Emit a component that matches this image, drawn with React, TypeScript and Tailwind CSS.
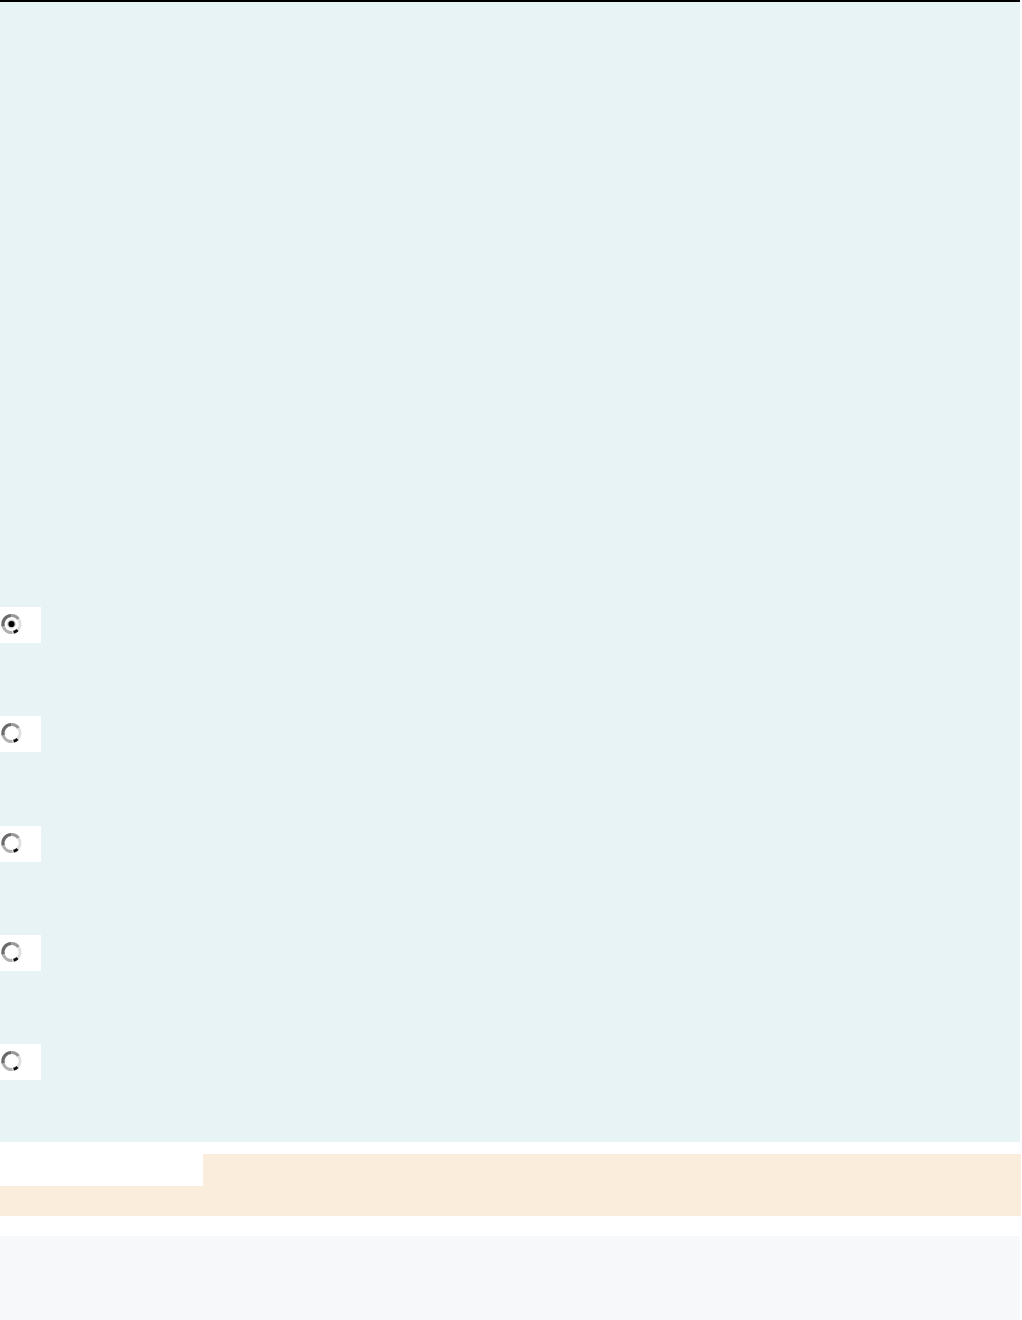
import React from "react";

const RadioMark = ({ checked }: { checked?: boolean }) => (
  <svg width="23" height="24" viewBox="0 0 23 24" className="block">
    <path d="M11.5 3.5 A8.5 8.5 0 0 0 3.3 14.5" fill="none" stroke="#6b6b6b" strokeWidth="3.2" />
    <path d="M3.3 14.5 A8.5 8.5 0 0 0 12.5 20.4" fill="none" stroke="#b0b0b0" strokeWidth="3.2" />
    <path d="M11.5 3.5 A8.5 8.5 0 0 1 18.5 7.2" fill="none" stroke="#999" strokeWidth="3.2" />
    <path d="M18.5 7.2 A8.5 8.5 0 0 1 17.5 18" fill="none" stroke="#e0e0e0" strokeWidth="3.2" />
    <path d="M17.5 18 A8.5 8.5 0 0 1 13.5 20.3" fill="none" stroke="#111" strokeWidth="3.2" />
    {checked && (
      <>
        <circle cx="11.5" cy="12" r="4.4" fill="#cfcfcf" />
        <circle cx="11.5" cy="12" r="3.1" fill="#000" />
      </>
    )}
  </svg>
);

const RadioBox = ({ checked }: { checked?: boolean }) => (
  <div className="h-[36px] w-[41px] bg-white pt-[5px]">
    <RadioMark checked={checked} />
  </div>
);

export default function App() {
  return (
    <div className="w-[1022px] bg-white">
      <section className="h-[1142px] w-[1020px] border-t-2 border-black bg-[#e7f3f4] pt-[605px]">
        <div className="flex flex-col gap-[73.3px]">
          <RadioBox checked />
          <RadioBox />
          <RadioBox />
          <RadioBox />
          <RadioBox />
        </div>
      </section>

      <section className="mt-3 w-[1021px] bg-[#fbeddc]">
        <div className="h-[32px] w-[203px] bg-white" />
        <div className="h-[30px]" />
      </section>

      <section className="mt-5 h-[84px] w-[1020px] bg-[#f7f8fa]" />
    </div>
  );
}
